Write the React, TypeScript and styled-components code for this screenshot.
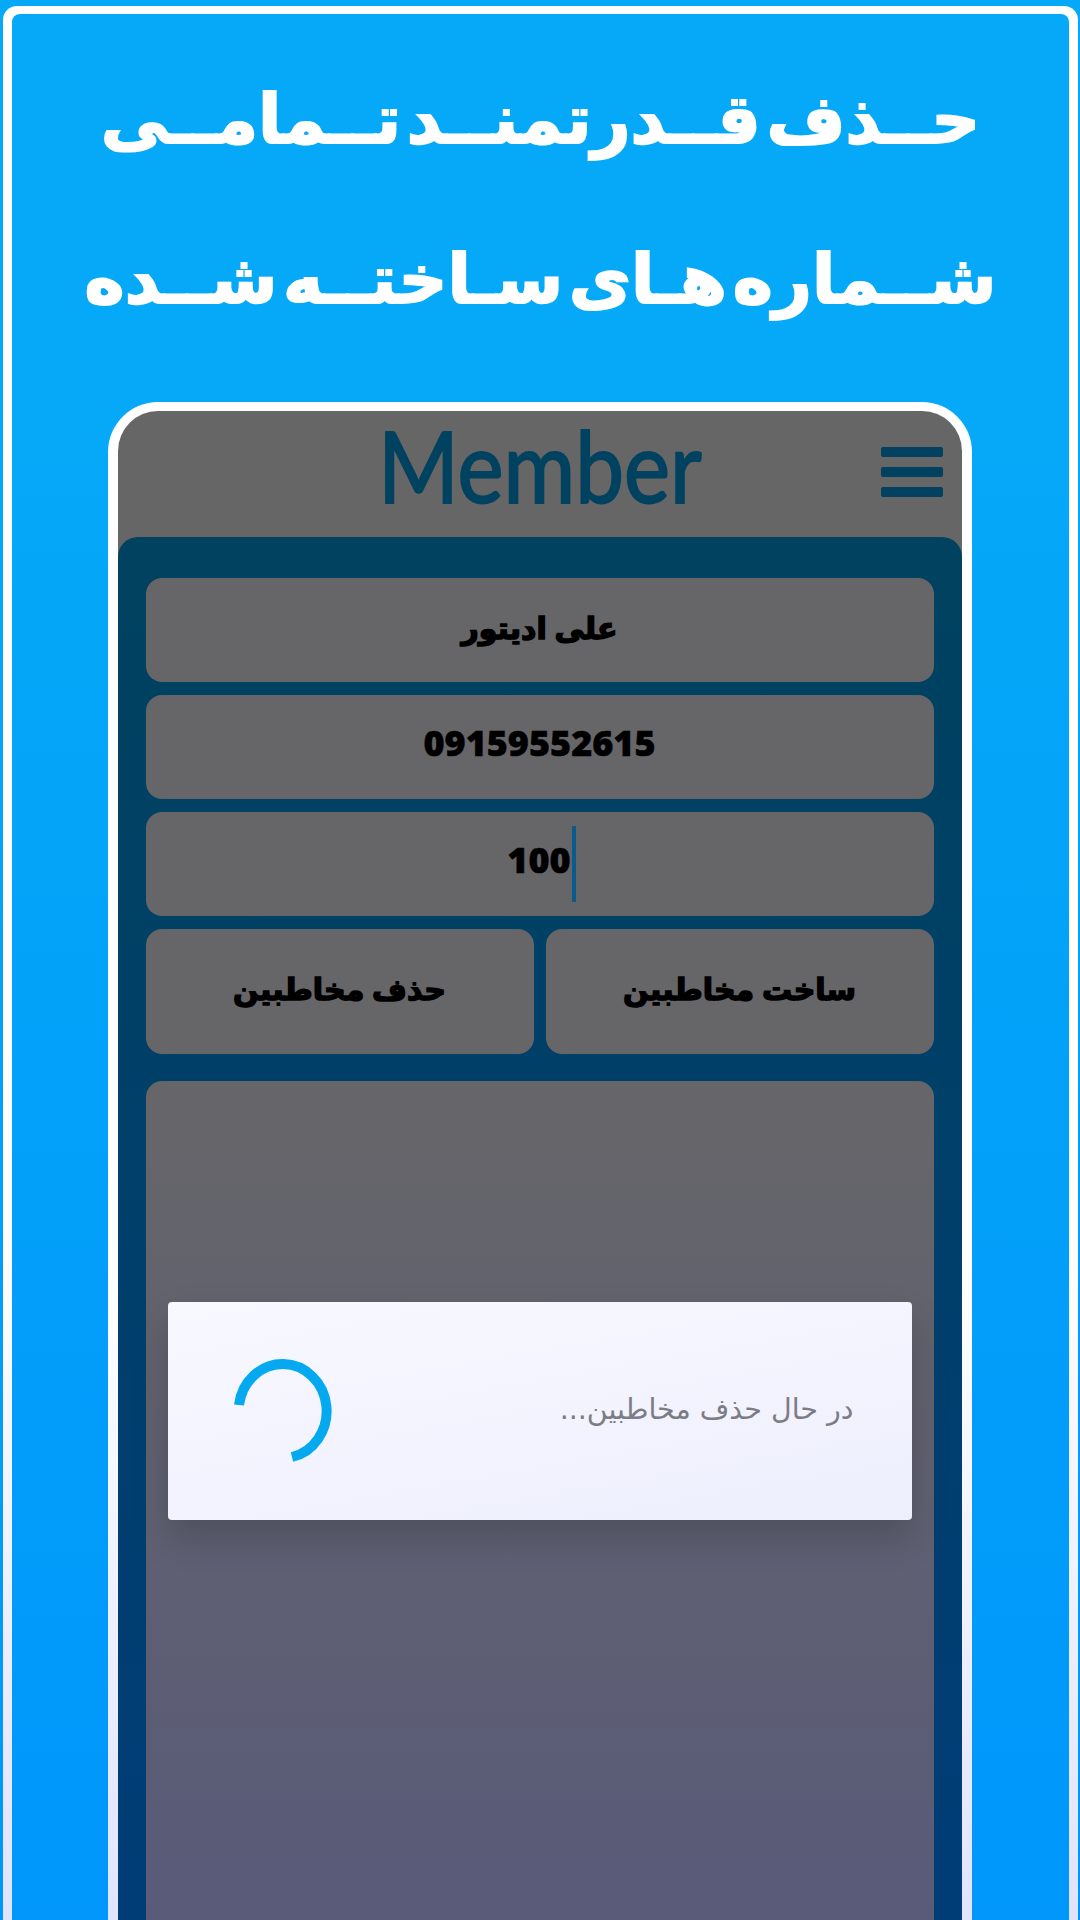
import React from 'react';
import styled, { createGlobalStyle } from 'styled-components';

const GlobalStyle = createGlobalStyle`
    html, body {
        margin: 0;
        padding: 0;
        background: #05a9f8;
    }
`;

const Page = styled.div`
    width: 1080px;
    height: 1920px;
    overflow: hidden;
    background: linear-gradient(180deg, #05a9f8 0%, #05a9f8 20%, #0096fb 100%);
    padding: 6px 2px 0 3px;
    box-sizing: border-box;
    font-family: "DejaVu Sans", sans-serif;
`;

const Frame = styled.div`
    height: 1960px;
    padding: 8px 9px 0;
    box-sizing: border-box;
    border-radius: 14px 14px 0 0;
    background: linear-gradient(180deg, #ffffff 0%, #ffffff 62%, #dfe3ff 98%);
`;

const Inner = styled.div`
    height: 100%;
    display: flex;
    flex-direction: column;
    align-items: center;
    border-radius: 8px 8px 0 0;
    background: linear-gradient(180deg, #05a9f8 0%, #05a9f8 22%, #0096fb 100%);
`;

const Headline = styled.h1`
    margin: 0;
    height: 388px;
    padding-top: 26px;
    box-sizing: border-box;
    color: #ffffff;
    font-size: 68px;
    font-weight: 700;
    line-height: 160px;
    text-align: center;
    white-space: nowrap;
    word-spacing: -18px;
    -webkit-text-stroke: 2px #ffffff;
`;

const Line = styled.div`
    direction: rtl;
`;

const Phone = styled.div`
    flex: 1;
    width: 864px;
    margin-right: 2px;
    padding: 9px 10px 0;
    box-sizing: border-box;
    border-radius: 50px 50px 0 0;
    background: linear-gradient(180deg, #ffffff 0%, #ffffff 55%, #dfe3ff 98%);
    display: flex;
    flex-direction: column;
`;

const Screen = styled.div`
    flex: 1;
    display: flex;
    flex-direction: column;
    border-radius: 40px 40px 0 0;
    background: #666666;
`;

const Header = styled.div`
    height: 126px;
    flex: none;
    display: grid;
    grid-template-columns: 1fr auto 1fr;
    align-items: center;
`;

const Logo = styled.div`
    grid-column: 2;
    margin-bottom: 18px;
    color: #00425f;
    font-family: "Lato", sans-serif;
    font-size: 99px;
    line-height: 100px;
    transform: scaleX(0.88);
    -webkit-text-stroke: 2px #00425f;
`;

const MenuButton = styled.div`
    grid-column: 3;
    justify-self: end;
    margin: 0 19px 4px 0;
    width: 62px;
    display: flex;
    flex-direction: column;
    gap: 10px;
`;

const MenuBar = styled.span`
    display: block;
    height: 10px;
    border-radius: 2px;
    background: #00425f;
`;

const Panel = styled.div`
    flex: 1;
    display: flex;
    flex-direction: column;
    gap: 13px;
    padding: 41px 28px 0;
    border-radius: 20px 20px 0 0;
    background: linear-gradient(180deg, #00425f 0%, #003d78 100%);
`;

const Field = styled.div<{ $arabic?: boolean }>`
    height: 104px;
    flex: none;
    display: flex;
    align-items: center;
    justify-content: center;
    padding-bottom: ${(p) => (p.$arabic ? '6px' : '10px')};
    box-sizing: border-box;
    border-radius: 16px;
    background: #666668;
    color: #000000;
    font-family: "Open Sans", "DejaVu Sans", sans-serif;
    font-size: ${(p) => (p.$arabic ? '30px' : '36px')};
    font-weight: 800;
    -webkit-text-stroke: ${(p) => (p.$arabic ? '1.5px #000000' : '0.5px #000000')};
`;

const Caret = styled.span`
    width: 4px;
    height: 76px;
    margin: 10px -4px 0 1px;
    background: #0a5a8c;
`;

const ButtonRow = styled.div`
    display: grid;
    grid-template-columns: 1fr 1fr;
    gap: 12px;
    flex: none;
`;

const ActionButton = styled(Field)`
    height: 125px;
`;

const LogBox = styled.div`
    position: relative;
    flex: 1;
    margin-top: 14px;
    border-radius: 16px 16px 0 0;
    background: linear-gradient(180deg, #666669 0%, #585a7a 100%);
`;

const Dialog = styled.div`
    position: absolute;
    top: 221px;
    left: 22px;
    right: 22px;
    height: 218px;
    display: flex;
    align-items: center;
    justify-content: space-between;
    padding: 0 58px 0 64px;
    box-sizing: border-box;
    border-radius: 4px;
    background: linear-gradient(170deg, #f8f8ff 0%, #edeffd 100%);
    box-shadow: 0 18px 36px rgba(0, 0, 0, 0.18);
`;

const DialogText = styled.div`
    direction: rtl;
    color: #7c7c85;
    font-size: 28.5px;
    font-weight: 400;
    margin-top: -4px;
`;

const Spinner = () => (
    <svg width="100" height="108" viewBox="0 0 100 108">
        <path
            d="M 7 48 A 44 47 0 1 1 60 100"
            fill="none"
            stroke="#05a9f0"
            strokeWidth="10"
        />
    </svg>
);

const App: React.FC = () => {
    return (
        <Page>
            <GlobalStyle />
            <Frame>
                <Inner>
                    <Headline>
                        <Line>حــذف قــدرتمنــد تــمامــی</Line>
                        <Line>شــماره هـای سـاختــه شــده</Line>
                    </Headline>
                    <Phone>
                        <Screen>
                            <Header>
                                <Logo>Member</Logo>
                                <MenuButton>
                                    <MenuBar />
                                    <MenuBar />
                                    <MenuBar />
                                </MenuButton>
                            </Header>
                            <Panel>
                                <Field $arabic>علی ادیتور</Field>
                                <Field>09159552615</Field>
                                <Field>
                                    100
                                    <Caret />
                                </Field>
                                <ButtonRow>
                                    <ActionButton $arabic>حذف مخاطبین</ActionButton>
                                    <ActionButton $arabic>ساخت مخاطبین</ActionButton>
                                </ButtonRow>
                                <LogBox>
                                    <Dialog>
                                        <Spinner />
                                        <DialogText>در حال حذف مخاطبین...</DialogText>
                                    </Dialog>
                                </LogBox>
                            </Panel>
                        </Screen>
                    </Phone>
                </Inner>
            </Frame>
        </Page>
    );
};

export default App;
